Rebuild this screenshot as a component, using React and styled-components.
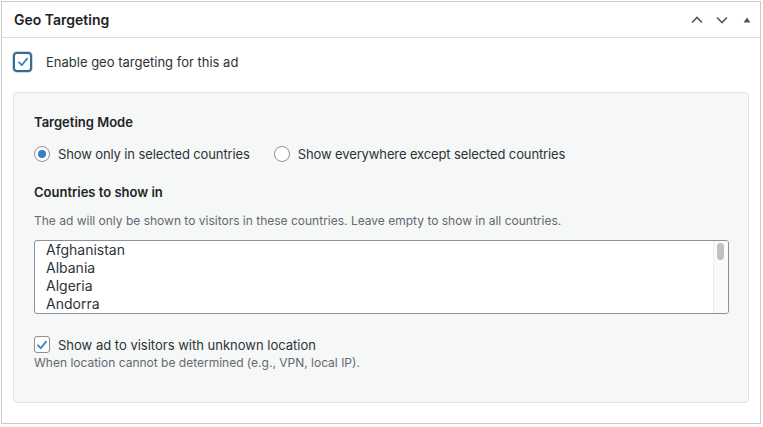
import React, { useState } from 'react';
import styled, { createGlobalStyle } from 'styled-components';

const GlobalStyle = createGlobalStyle`
  html, body {
    margin: 0;
    padding: 0;
    background: #fff;
  }
  body {
    padding: 1px 2px 0 1px;
    font-family: Inter, "Liberation Sans", Arial, sans-serif;
    color: #1d2327;
    -webkit-font-smoothing: antialiased;
  }
`;

// only the rows visible in the list box
const COUNTRIES = ['Afghanistan', 'Albania', 'Algeria', 'Andorra'];

const Postbox = styled.div`
  width: 758px;
  height: 421px;
  border: 1px solid #c9cacc;
  background: #fff;
  display: flex;
  flex-direction: column;
`;

const Header = styled.div`
  height: 35px;
  border-bottom: 1px solid #dcdcde;
  display: flex;
  align-items: center;
  padding: 0 0 0 12px;
`;

const Title = styled.h2`
  margin: 0;
  flex: 1;
  font-size: 14px;
  font-weight: 600;
  color: #1d2327;
`;

const HandleButton = styled.button`
  width: ${(p) => p.w || 25}px;
  height: 28px;
  padding: 0;
  border: 0;
  background: none;
  display: flex;
  align-items: center;
  justify-content: center;
  color: #50575e;
`;

const Inside = styled.div`
  padding: 14px 11px 0 11px;
`;

const CheckRow = styled.label`
  display: flex;
  align-items: center;
  gap: ${(p) => p.gap || 8}px;
  font-size: 13px;
  color: #2c3338;
`;

const Box = styled.span`
  box-sizing: border-box;
  width: ${(p) => p.size}px;
  height: ${(p) => p.size + 1}px;
  border: ${(p) => (p.focus ? '2px solid #3a6b8c' : '1px solid #8c8f94')};
  border-radius: ${(p) => (p.focus ? 4 : 3)}px;
  background: #fff;
  display: flex;
  align-items: center;
  justify-content: center;
  flex-shrink: 0;
  box-shadow: ${(p) => (p.focus ? '0 0 0 1px #c5d9e8' : 'none')};
`;

const Panel = styled.div`
  margin-top: 20px;
  border: 1px solid #e2e3e5;
  border-radius: 4px;
  background: #f6f7f7;
  padding: 21px 19px 31px 20px;
  display: flex;
  flex-direction: column;
`;

const FieldLabel = styled.div`
  font-size: 13px;
  font-weight: 600;
  color: #1d2327;
  line-height: 16px;
`;

const RadioGroup = styled.div`
  display: flex;
  gap: 24px;
  margin-top: 16px;
  margin-bottom: 22px;
`;

const RadioLabel = styled.label`
  display: flex;
  align-items: center;
  gap: 8px;
  font-size: 13px;
  letter-spacing: -0.12px;
  color: #2c3338;
  line-height: 16px;
`;

const Radio = styled.span`
  box-sizing: border-box;
  width: 16px;
  height: 16px;
  border-radius: 50%;
  border: 1px solid #8c8f94;
  background: #fff;
  display: flex;
  align-items: center;
  justify-content: center;

  &::after {
    content: '';
    width: 8px;
    height: 8px;
    border-radius: 50%;
    background: ${(p) => (p.checked ? '#3582c4' : 'transparent')};
  }
`;

const Description = styled.p`
  margin: ${(p) => p.top || 0}px 0 0 0;
  font-size: 12px;
  line-height: 16px;
  color: #646970;
`;

const ListBox = styled.div`
  margin-top: 11px;
  height: 72px;
  border: 1px solid #8c8f94;
  border-radius: 3px;
  background: #fff;
  display: flex;
  overflow: hidden;
`;

const Options = styled.div`
  flex: 1;
  padding-left: 11px;
`;

const Option = styled.div`
  font-size: 14px;
  line-height: 18px;
  color: #2c3338;
`;

const ScrollTrack = styled.div`
  width: 15px;
  background: #fafafa;
  border-left: 1px solid #ececec;
  padding: 2px 4px 0 3px;
  box-sizing: border-box;
`;

const ScrollThumb = styled.div`
  height: 17px;
  border-radius: 4px;
  background: #c1c1c1;
`;

const UnknownRow = styled.div`
  margin-top: 22px;
  display: flex;
  flex-direction: column;
  gap: 2px;
`;

const Check = ({ color }) => (
  <svg width="12" height="12" viewBox="0 0 12 12">
    <path d="M2 6.3 L4.8 9.2 L10 2.6" fill="none" stroke={color} strokeWidth="1.8" strokeLinecap="round" strokeLinejoin="round" />
  </svg>
);

export default function App() {
  const [mode, setMode] = useState('only');

  return (
    <>
      <GlobalStyle />
      <Postbox>
        <Header>
          <Title>Geo Targeting</Title>
          <HandleButton aria-label="Move up">
            <svg width="14" height="14" viewBox="0 0 14 14">
              <path d="M2 9.5 L7 4.5 L12 9.5" fill="none" stroke="currentColor" strokeWidth="1.6" />
            </svg>
          </HandleButton>
          <HandleButton aria-label="Move down">
            <svg width="14" height="14" viewBox="0 0 14 14">
              <path d="M2 4.5 L7 9.5 L12 4.5" fill="none" stroke="currentColor" strokeWidth="1.6" />
            </svg>
          </HandleButton>
          <HandleButton aria-label="Toggle panel" w={26}>
            <svg width="10" height="10" viewBox="0 0 10 10">
              <path d="M1.5 7.5 L5 2.5 L8.5 7.5 Z" fill="currentColor" />
            </svg>
          </HandleButton>
        </Header>
        <Inside>
          <CheckRow gap={14}>
            <Box size={19} focus>
              <Check color="#3582c4" />
            </Box>
            Enable geo targeting for this ad
          </CheckRow>
          <Panel>
            <FieldLabel>Targeting Mode</FieldLabel>
            <RadioGroup>
              <RadioLabel onClick={() => setMode('only')}>
                <Radio checked={mode === 'only'} />
                Show only in selected countries
              </RadioLabel>
              <RadioLabel onClick={() => setMode('except')}>
                <Radio checked={mode === 'except'} />
                Show everywhere except selected countries
              </RadioLabel>
            </RadioGroup>
            <FieldLabel>Countries to show in</FieldLabel>
            <Description top={13}>
              The ad will only be shown to visitors in these countries. Leave empty to show in all countries.
            </Description>
            <ListBox>
              <Options>
                {COUNTRIES.map((c) => (
                  <Option key={c}>{c}</Option>
                ))}
              </Options>
              <ScrollTrack>
                <ScrollThumb />
              </ScrollTrack>
            </ListBox>
            <UnknownRow>
              <CheckRow>
                <Box size={16}>
                  <Check color="#3582c4" />
                </Box>
                Show ad to visitors with unknown location
              </CheckRow>
              <Description>When location cannot be determined (e.g., VPN, local IP).</Description>
            </UnknownRow>
          </Panel>
        </Inside>
      </Postbox>
    </>
  );
}
